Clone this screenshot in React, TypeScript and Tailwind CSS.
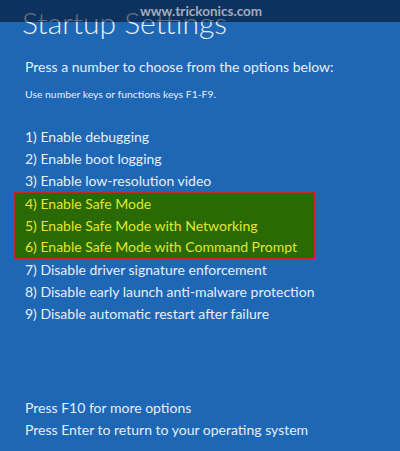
import React from 'react';

const options = [
  '1) Enable debugging',
  '2) Enable boot logging',
  '3) Enable low-resolution video',
];
const safeModes = [
  '4) Enable Safe Mode',
  '5) Enable Safe Mode with Networking',
  '6) Enable Safe Mode with Command Prompt',
];
const moreOptions = [
  '7) Disable driver signature enforcement',
  '8) Disable early launch anti-malware protection',
  '9) Disable automatic restart after failure',
];

export default function App() {
  return (
    <div className="relative h-[451px] w-[400px] overflow-hidden bg-[#1e67b5] font-['Lato',sans-serif] text-[#e8eef6]">
      {/* watermark band */}
      <div className="absolute inset-x-0 top-0 z-10 flex h-[22px] justify-center bg-[#00081a]/55 pl-[2px]">
        <span className="text-[13.5px] font-bold leading-[22px] text-[#a3acbb]">www.trickonics.com</span>
      </div>

      <div className="flex h-full flex-col whitespace-nowrap pl-[25px] pb-[10px]">
        <h1 className="-ml-[3px] mt-[4px] text-[30px] font-light leading-[36px]">Startup Settings</h1>

        <p className="mt-[16px] text-[14px] leading-[22px]">Press a number to choose from the options below:</p>
        <p className="mt-[9px] text-[10.4px] leading-[14px]">Use number keys or functions keys F1-F9.</p>

        <ul className="mt-[25px] text-[14px] leading-[22px]">
          {options.map((o) => (
            <li key={o}>{o}</li>
          ))}
        </ul>
        <ul className="-ml-[11px] w-[301px] border border-[#c0272d] bg-[#2a6a05] pl-[10px] text-[14px] leading-[21.5px] text-[#e4e52c]">
          {safeModes.map((o) => (
            <li key={o}>{o}</li>
          ))}
        </ul>
        <ul className="text-[14px] leading-[22px]">
          {moreOptions.map((o) => (
            <li key={o}>{o}</li>
          ))}
        </ul>

        <div className="mt-auto text-[14px] leading-[22px]">
          <p>Press F10 for more options</p>
          <p>Press Enter to return to your operating system</p>
        </div>
      </div>
    </div>
  );
}
